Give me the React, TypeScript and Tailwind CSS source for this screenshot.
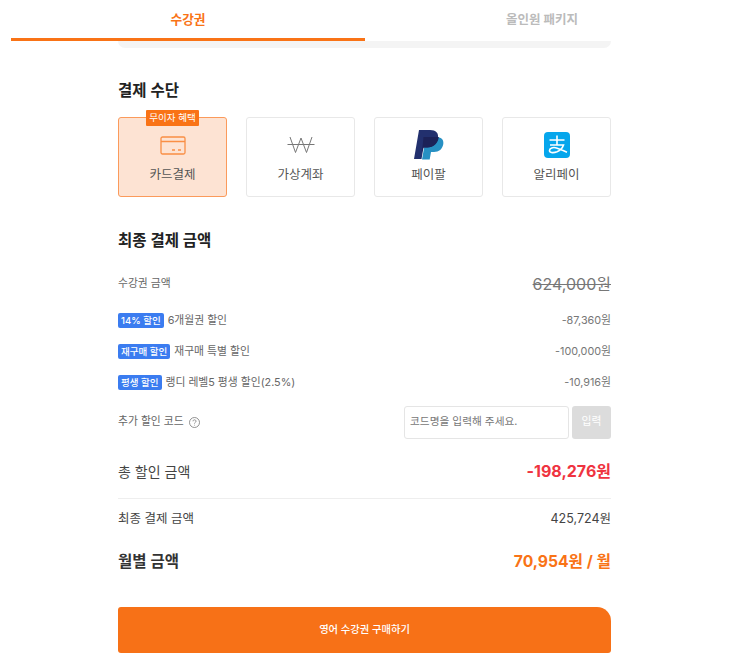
const FONT = "font-['Inter','Noto_Sans_CJK_KR',sans-serif]";

function CardIcon() {
  return (
    <svg width="26" height="19" viewBox="0 0 26 19" fill="none" stroke="#f97316" strokeWidth="1.3" opacity="0.75">
      <rect x="1" y="1" width="24" height="17" rx="1.5" />
      <path d="M1 5.5h24M12 14h3M18 14h3" />
    </svg>
  );
}

function WonIcon() {
  return (
    <svg width="28" height="18" viewBox="0 0 28 18" fill="none" stroke="#777" strokeWidth="1">
      <path d="M3 1l5.5 15.5L14 2l5.500 14.500L25 1M0.500 8.500h27" />
    </svg>
  );
}

function PayPalIcon() {
  return (
    <svg width="30" height="30" viewBox="0 0 30 30">
      <path d="M12 7h10c5 0 8 2.500 7.300 7-.8 5-4.300 8-9.300 8h-3l-1.300 7.500H8z" fill="#2790c3" />
      <path d="M5 0h11c6 0 8.800 3 8 8-1 6-5 9.500-11 9.500H9.500L7.500 29H0z" fill="#22306e" />
      <path d="M9.500 7h15.300c-.8 6-5 10.500-11.500 10.500H9.500L8 22z" fill="#1c2258" />
    </svg>
  );
}

function AlipayIcon() {
  return (
    <svg width="26" height="26" viewBox="0 0 26 26">
      <rect width="26" height="26" rx="4" fill="#06a6ec" />
      <path
        d="M5.500 8h15M13 3.500V13M6 13h13.500c-1 3-3.500 5.500-6.500 6.800-3 1.200-7.500 1.400-7.500-1.300 0-2.500 3.500-3.500 7-2.600 3 .8 6 2.400 10.500 4.300"
        fill="none"
        stroke="#fff"
        strokeWidth="1.600"
      />
    </svg>
  );
}

function HelpIcon() {
  return (
    <svg width="11" height="11" viewBox="0 0 11 11" fill="none" stroke="#777" strokeWidth="0.8">
      <circle cx="5.500" cy="5.500" r="5" />
      <path d="M4 4.300c0-2 3-2 3 0 0 1.200-1.500 1-1.500 2.300M5.500 7.800v.7" />
    </svg>
  );
}

function PayOption({ label, icon, active }: { label: string; icon: React.ReactNode; active?: boolean }) {
  return (
    <div
      className={`relative flex h-[80px] w-[109px] flex-col items-center rounded-[3px] border ${
        active ? 'border-[#fb9a5b] bg-[#fde3d3]' : 'border-[#e8e8e8] bg-white'
      }`}
    >
      {active && (
        <span className="absolute left-[27px] top-[-8px] flex h-[16px] w-[53px] items-center justify-center rounded-[1px] bg-[#f97316] text-[9.5px] text-white">
          무이자 혜택
        </span>
      )}
      <div className="mt-[12px] flex h-[30px] items-center justify-center">{icon}</div>
      <span className="mt-[5px] text-[12.5px] leading-5 text-[#555]">{label}</span>
    </div>
  );
}

function Tag({ children }: { children: React.ReactNode }) {
  return (
    <span className="mb-[3px] mr-1 rounded-[2px] bg-[#3b7cf0] px-[3px] text-[9.5px] font-medium leading-[15px] text-white">
      {children}
    </span>
  );
}

function DiscountRow({ tag, label, amount }: { tag: string; label: string; amount: string }) {
  return (
    <div className="flex h-[31px] items-center justify-between text-[10.8px] text-[#666]">
      <div className="flex items-center">
        <Tag>{tag}</Tag>
        {label}
      </div>
      <span className="text-[#777]">{amount}</span>
    </div>
  );
}

export default function App() {
  return (
    <div className={`${FONT} h-[659px] overflow-hidden bg-white`}>
      <div className="ml-[11px] flex h-[41px] w-[708px]">
        <div className="flex h-[41px] w-[354px] items-start justify-center border-b-[3px] border-[#f97316] pt-[10px] text-[12.7px] font-semibold text-[#f97316]">
          수강권
        </div>
        <div className="flex w-[354px] items-start justify-center pt-[11px] text-[12.5px] font-semibold text-[#bbb]">
          올인원 패키지
        </div>
      </div>

      <div className="ml-[118px] w-[493px]">
        <div className="h-[7px] rounded-b-lg bg-[#f4f4f4]" />

        <h2 className="mt-[31px] text-[15.5px] font-semibold leading-[24px] text-[#222]">결제 수단</h2>
        <div className="mt-[14px] flex justify-between">
          <PayOption label="카드결제" icon={<CardIcon />} active />
          <PayOption label="가상계좌" icon={<WonIcon />} />
          <PayOption label="페이팔" icon={<PayPalIcon />} />
          <PayOption label="알리페이" icon={<AlipayIcon />} />
        </div>

        <h2 className="mt-[32px] text-[15.5px] font-semibold leading-[24px] text-[#222]">최종 결제 금액</h2>

        <div className="mt-[11px] flex h-[40px] items-center justify-between">
          <span className="text-[10.8px] text-[#666]">수강권 금액</span>
          <span className="text-base text-[#777] line-through">624,000원</span>
        </div>

        <div className="mt-[2px]">
          <DiscountRow tag="14% 할인" label="6개월권 할인" amount="-87,360원" />
          <DiscountRow tag="재구매 할인" label="재구매 특별 할인" amount="-100,000원" />
          <DiscountRow tag="평생 할인" label="랭디 레벨5 평생 할인(2.5%)" amount="-10,916원" />
        </div>

        <div className="mt-[7px] flex items-center justify-between">
          <div className="flex items-center gap-[5px] text-[10.8px] text-[#666]">
            추가 할인 코드
            <HelpIcon />
          </div>
          <div className="flex gap-[3px]">
            <div className="flex h-[33px] w-[165px] items-center rounded-[3px] border border-[#e5e5e5] pl-[5px] text-[10.7px] text-[#777]">
              코드명을 입력해 주세요.
            </div>
            <div className="flex h-[33px] w-[39px] items-center justify-center rounded-[3px] bg-[#dcdcdc] text-[10.8px] text-white">
              입력
            </div>
          </div>
        </div>

        <div className="mt-[16px] flex h-[32px] items-center justify-between">
          <span className="text-[14px] text-[#444]">총 할인 금액</span>
          <span className="text-[16px] font-bold text-[#ef3340]">-198,276원</span>
        </div>

        <div className="mt-[11px] border-t border-[#eee]" />

        <div className="mt-[8px] flex h-[24px] items-center justify-between">
          <span className="text-[12.5px] text-[#444]">최종 결제 금액</span>
          <span className="text-[12.5px] text-[#444]">425,724원</span>
        </div>

        <div className="mt-[17px] flex h-[28px] items-center justify-between">
          <span className="text-[15.5px] font-semibold text-[#333]">월별 금액</span>
          <span className="text-[15.7px] font-bold text-[#f97316]">70,954원 / 월</span>
        </div>

        <button
          type="button"
          className="mt-[31px] flex h-[46px] w-full items-center justify-center rounded-[3px] rounded-tr-[14px] bg-[#f77117] text-[10.3px] font-medium text-white"
        >
          영어 수강권 구매하기
        </button>
      </div>
    </div>
  );
}
